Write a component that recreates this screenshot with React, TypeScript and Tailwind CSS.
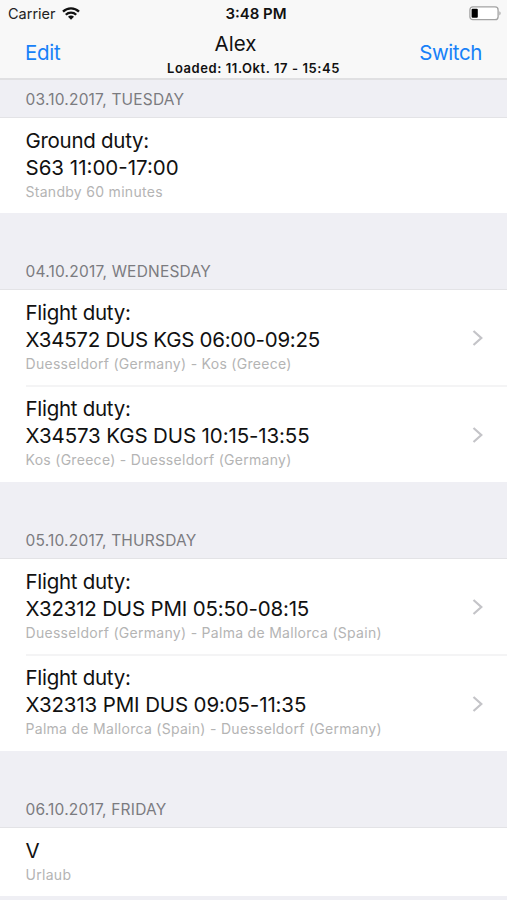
type Duty = {
  kind?: string;
  title: string;
  tracking?: string;
  detail: string;
  link?: boolean;
};

type Day = {
  date: string;
  duties: Duty[];
};

const days: Day[] = [
  {
    date: '03.10.2017, TUESDAY',
    duties: [{ kind: 'Ground duty:', title: 'S63 11:00-17:00', detail: 'Standby 60 minutes' }],
  },
  {
    date: '04.10.2017, WEDNESDAY',
    duties: [
      {
        kind: 'Flight duty:',
        title: 'X34572 DUS KGS 06:00-09:25',
        tracking: 'tracking-[-0.27px]',
        detail: 'Duesseldorf (Germany) - Kos (Greece)',
        link: true,
      },
      {
        kind: 'Flight duty:',
        title: 'X34573 KGS DUS 10:15-13:55',
        tracking: 'tracking-[-0.12px]',
        detail: 'Kos (Greece) - Duesseldorf (Germany)',
        link: true,
      },
    ],
  },
  {
    date: '05.10.2017, THURSDAY',
    duties: [
      {
        kind: 'Flight duty:',
        title: 'X32312 DUS PMI 05:50-08:15',
        tracking: 'tracking-[-0.18px]',
        detail: 'Duesseldorf (Germany) - Palma de Mallorca (Spain)',
        link: true,
      },
      {
        kind: 'Flight duty:',
        title: 'X32313 PMI DUS 09:05-11:35',
        tracking: 'tracking-[-0.13px]',
        detail: 'Palma de Mallorca (Spain) - Duesseldorf (Germany)',
        link: true,
      },
    ],
  },
  {
    date: '06.10.2017, FRIDAY',
    duties: [{ title: 'V', detail: 'Urlaub' }],
  },
];

function WifiIcon() {
  return (
    <svg width="18" height="13" viewBox="0 0 18 13" fill="none" stroke="#111" strokeWidth="2.3">
      <path d="M1 4.6a11.4 11.4 0 0 1 16 0" />
      <path d="M3.8 7.7a7.4 7.4 0 0 1 10.4 0" />
      <path d="M9 12.8 6 9.8a4.2 4.2 0 0 1 6 0Z" fill="#111" stroke="none" />
    </svg>
  );
}

function BatteryIcon() {
  return (
    <svg width="33" height="15" viewBox="0 0 33 15" fill="none">
      <rect x="0.9" y="0.9" width="28.2" height="12.8" rx="3" fill="#fff" stroke="#a3a3a3" strokeWidth="1.3" />
      <rect x="2.6" y="2.8" width="6.2" height="9" rx="1" fill="#000" />
      <path d="M30.4 5.2c1.6.6 1.6 3.6 0 4.2Z" fill="#a3a3a3" />
    </svg>
  );
}

function Chevron() {
  return (
    <svg width="12" height="18" viewBox="0 0 12 18" fill="none" stroke="#c4c4c8" strokeWidth="2.2">
      <path d="M1.5 2 9.3 9l-7.8 7" />
    </svg>
  );
}

function DutyRow({ duty, divider }: { duty: Duty; divider: boolean }) {
  return (
    <div className="pl-[25.5px]">
      <div className={`flex items-center justify-between pr-[23px] ${divider ? 'border-t-2 border-[#f4f4f5]' : ''}`}>
        <div className={`whitespace-nowrap ${divider ? 'pt-[8px] pb-[12px]' : 'pt-[9px] pb-[11px]'}`}>
          {duty.kind && <p className="text-[20.5px] leading-[27px] tracking-[-0.28px] text-[#111]">{duty.kind}</p>}
          <p className={`text-[20.5px] leading-[27px] text-[#111] ${duty.tracking ?? ''}`}>{duty.title}</p>
          <p className="text-[14px] leading-[21px] tracking-[0.29px] text-[#b4b4b4]">{duty.detail}</p>
        </div>
        {duty.link && <Chevron />}
      </div>
    </div>
  );
}

export default function App() {
  return (
    <div className="flex h-[900px] w-[507px] flex-col overflow-hidden bg-[#efeff4] font-['Inter',sans-serif]">
      <header className="h-[80px] shrink-0 border-b-2 border-[#e0e0e2] bg-[#f8f8f8]">
        {/* Status bar */}
        <div className="grid h-[27px] grid-cols-3 items-center pr-[5px] pl-2">
          <div className="flex items-center gap-[6px]">
            <span className="text-[14.5px] text-[#222]">Carrier</span>
            <WifiIcon />
          </div>
          <span className="pt-px pl-[2px] text-center text-[15px] font-semibold text-[#111]">3:48 PM</span>
          <div className="flex justify-end">
            <BatteryIcon />
          </div>
        </div>

        {/* Navigation bar */}
        <div className="grid h-[51px] grid-cols-[1fr_auto_1fr] items-center px-[25px]">
          <button type="button" className="pt-px text-left text-[20.5px] tracking-[-0.3px] text-[#1781f8]">
            Edit
          </button>
          <div className="pt-[2px] text-center text-[#111]">
            <h1 className="pr-[36px] text-[20.5px] leading-[28px]">Alex</h1>
            <p className="text-[13px] leading-[20px] font-semibold tracking-[0.57px]">Loaded: 11.Okt. 17 - 15:45</p>
          </div>
          <button type="button" className="pt-px text-right text-[20.5px] tracking-[-0.4px] text-[#1781f8]">
            Switch
          </button>
        </div>
      </header>

      <main className="shrink-0">
        {days.map((day, i) => (
          <section key={day.date}>
            <div
              className={`flex items-end border-b border-[#e3e3e6] pb-[6px] pl-[25.5px] ${i === 0 ? 'h-[38px]' : 'h-[77px]'}`}
            >
              <h2 className="text-[15.5px] leading-[22px] tracking-[0.2px] text-[#7b7b80]">{day.date}</h2>
            </div>
            <div className="bg-white">
              {day.duties.map((duty, j) => (
                <DutyRow key={duty.detail} duty={duty} divider={j > 0} />
              ))}
            </div>
          </section>
        ))}
      </main>
    </div>
  );
}
